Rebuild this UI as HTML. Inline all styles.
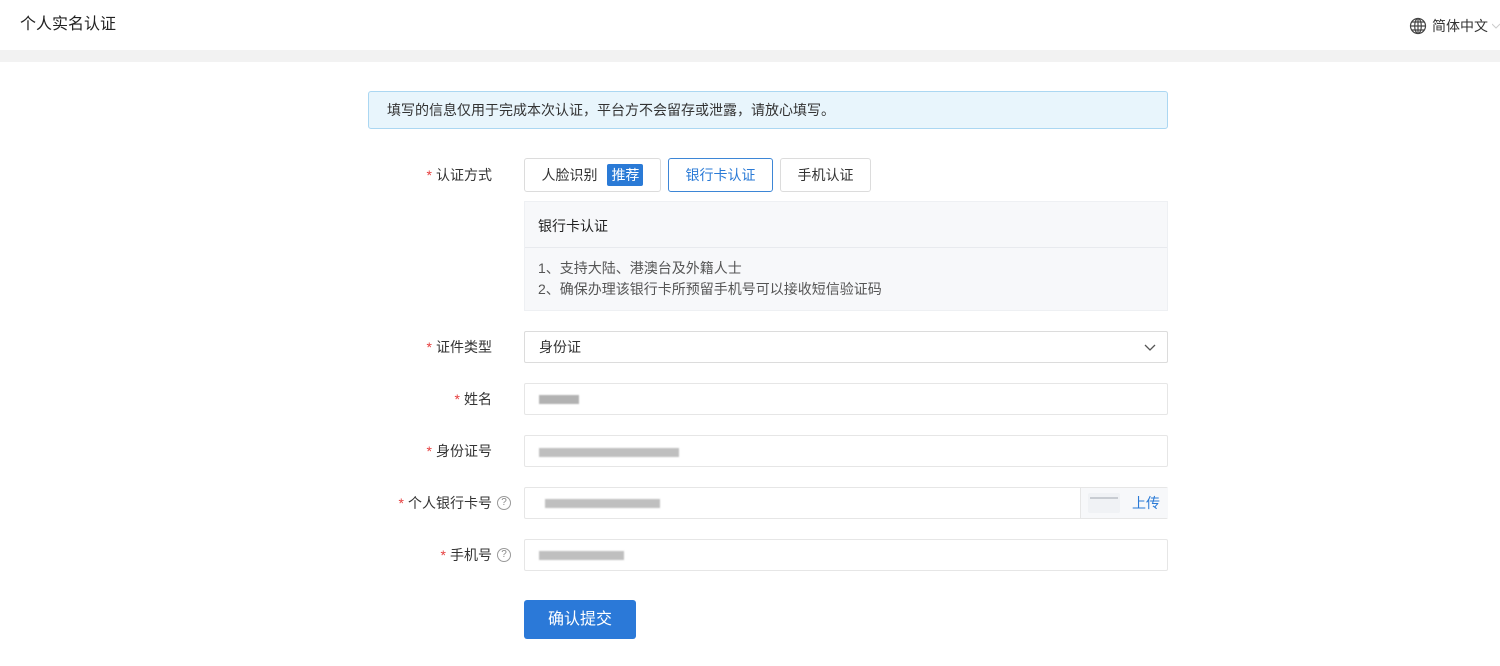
<!DOCTYPE html>
<html><head><meta charset="utf-8"><style>
*{box-sizing:border-box;margin:0;padding:0}
body{width:1500px;height:666px;background:#fff;font-family:"Liberation Sans","Noto Sans CJK SC",sans-serif;color:#333;font-size:14px;position:relative;overflow:hidden}
.abs{position:absolute}
.hdr{left:0;top:0;width:1500px;height:50px;background:#fff}
.band{left:0;top:50px;width:1500px;height:12px;background:#f2f2f2}
.alert{left:368px;top:91px;width:800px;height:38px;background:#e8f5fc;border:1px solid #abd7f2;border-radius:3px;padding-left:18px;line-height:36px;font-size:14px;color:#333}
.lbl{width:492px;left:0;text-align:right;font-size:14px;color:#333;line-height:20px}
.lbl b{color:#e63c3c;font-weight:normal;margin-right:4px}
.q{position:absolute;display:inline-block;width:14px;height:14px;border:1px solid #999;border-radius:50%;font-size:10px;line-height:12px;text-align:center;color:#888}
.btn{top:158px;height:34px;border:1px solid #dcdcdc;border-radius:3px;background:#fff;line-height:32px;text-align:center;font-size:14px;color:#333}
.inp{left:524px;width:644px;height:32px;border:1px solid #e6e6e6;border-radius:2px;background:#fff}
.blur{position:absolute;height:9px;background:#999;filter:blur(0.8px);opacity:.75}
</style></head><body>
<div class="abs hdr"></div>
<div class="abs" style="left:20px;top:14px;font-size:16px;color:#222;line-height:22px">个人实名认证</div>
<svg class="abs" style="left:1409px;top:17px" width="18" height="18" viewBox="0 0 18 18" fill="none" stroke="#444" stroke-width="1.2"><circle cx="9" cy="9" r="7.5"/><ellipse cx="9" cy="9" rx="3.3" ry="7.5"/><path d="M1.5 9h15M2.8 5h12.4M2.8 13h12.4M9 1.5v15"/></svg>
<div class="abs" style="left:1432px;top:16px;font-size:14px;color:#333">简体中文</div>
<svg class="abs" style="left:1492px;top:22px" width="8" height="8" viewBox="0 0 8 8"><path d="M0 2l4 4 4-4" fill="none" stroke="#ccc" stroke-width="1"/></svg>
<div class="abs band"></div>
<div class="abs alert">填写的信息仅用于完成本次认证，平台方不会留存或泄露，请放心填写。</div>

<div class="abs lbl" style="top:165px"><b>*</b>认证方式</div>
<div class="abs btn" style="left:524px;width:137px">人脸识别 <span style="display:inline-block;background:#2a7ad6;color:#fff;padding:0 4px;line-height:22px;border-radius:2px;margin-left:6px">推荐</span></div>
<div class="abs btn" style="left:668px;width:105px;border-color:#3d86d6;color:#2a7ad6">银行卡认证</div>
<div class="abs btn" style="left:780px;width:91px">手机认证</div>

<div class="abs" style="left:524px;top:201px;width:644px;height:110px;background:#f7f8fa;border:1px solid #eef0f3"></div>
<div class="abs" style="left:525px;top:247px;width:642px;height:1px;background:#e8eaee"></div>
<div class="abs" style="left:538px;top:216px;font-size:14px;color:#222">银行卡认证</div>
<div class="abs" style="left:538px;top:258px;font-size:14px;color:#555;line-height:21px">1、支持大陆、港澳台及外籍人士<br>2、确保办理该银行卡所预留手机号可以接收短信验证码</div>

<div class="abs lbl" style="top:337px"><b>*</b>证件类型</div>
<div class="abs inp" style="top:331px;border-color:#dcdcdc;padding-left:14px;line-height:30px;color:#333">身份证</div>
<svg class="abs" style="left:1144px;top:342px" width="12" height="10" viewBox="0 0 12 10"><path d="M1 3l5 5 5-5" fill="none" stroke="#555" stroke-width="1.3"/></svg>

<div class="abs lbl" style="top:389px"><b>*</b>姓名</div>
<div class="abs inp" style="top:383px"><div class="blur" style="left:14px;top:11px;width:40px"></div></div>

<div class="abs lbl" style="top:441px"><b>*</b>身份证号</div>
<div class="abs inp" style="top:435px"><div class="blur" style="left:14px;top:12px;width:140px;background:#aaa"></div></div>

<div class="abs lbl" style="top:493px"><b>*</b>个人银行卡号</div>
<span class="q" style="left:497px;top:496px">?</span>
<div class="abs inp" style="top:487px"><div class="blur" style="left:20px;top:11px;width:115px;background:#aaa"></div>
<div style="position:absolute;left:555px;top:0;width:88px;height:30px;background:#f7f8fa;border-left:1px solid #e6e6e6"></div>
<div style="position:absolute;left:563px;top:5px;width:32px;height:20px;background:#f0f2f5;border-radius:2px"><div style="margin:4px 2px;height:2px;background:#c8ccd2"></div></div>
<div style="position:absolute;left:607px;top:5px;color:#2a7ad6;font-size:14px">上传</div></div>

<div class="abs lbl" style="top:545px"><b>*</b>手机号</div>
<span class="q" style="left:497px;top:548px">?</span>
<div class="abs inp" style="top:539px"><div class="blur" style="left:14px;top:11px;width:85px;background:#aaa"></div></div>

<div class="abs" style="left:524px;top:600px;width:112px;height:39px;background:#2b79d8;border-radius:3px;color:#fff;font-size:16px;line-height:39px;text-align:center">确认提交</div>
</body></html>
